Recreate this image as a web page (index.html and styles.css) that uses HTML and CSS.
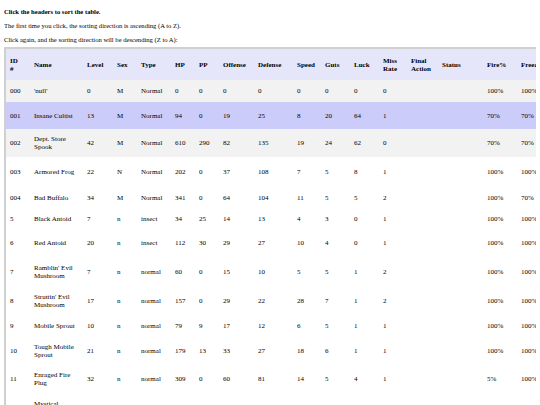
FILE: index.html
```html
<!DOCTYPE html>
<html>
<head>
<meta charset="utf-8">
<link rel="stylesheet" href="styles.css">
</head>
<body>
<div class="intro">
  <p class="lead">Click the headers to sort the table.</p>
  <p>The first time you click, the sorting direction is ascending (A to Z).</p>
  <p>Click again, and the sorting direction will be descending (Z to A):</p>
</div>
<table class="enemies">
  <colgroup>
    <col class="c-id"><col class="c-name"><col class="c-level"><col class="c-sex"><col class="c-type">
    <col class="c-hp"><col class="c-pp"><col class="c-off"><col class="c-def"><col class="c-speed">
    <col class="c-guts"><col class="c-luck"><col class="c-miss"><col class="c-final"><col class="c-status">
    <col class="c-fire"><col class="c-freeze"><col class="c-flash"><col class="c-para">
  </colgroup>
  <thead>
    <tr class="head">
      <th>ID<br>#</th><th>Name</th><th>Level</th><th>Sex</th><th>Type</th><th>HP</th><th>PP</th><th>Offense</th><th>Defense</th><th>Speed</th><th>Guts</th><th>Luck</th><th>Miss<br>Rate</th><th>Final<br>Action</th><th>Status</th><th>Fire%</th><th>Freeze%</th><th>Flash%</th><th>Paralysis%</th>
    </tr>
  </thead>
  <tbody>
    <tr class="grey h22"><td>000</td><td>'null'</td><td>0</td><td>M</td><td>Normal</td><td>0</td><td>0</td><td>0</td><td>0</td><td>0</td><td>0</td><td>0</td><td>0</td><td></td><td></td><td>100%</td><td>100%</td><td>100%</td><td>100%</td></tr>
    <tr class="sel h27"><td>001</td><td>Insane Cultist</td><td>13</td><td>M</td><td>Normal</td><td>94</td><td>0</td><td>19</td><td>25</td><td>8</td><td>20</td><td>64</td><td>1</td><td></td><td></td><td>70%</td><td>70%</td><td>100%</td><td>100%</td></tr>
    <tr class="grey h28"><td>002</td><td>Dept. Store Spook</td><td>42</td><td>M</td><td>Normal</td><td>610</td><td>290</td><td>82</td><td>135</td><td>19</td><td>24</td><td>62</td><td>0</td><td></td><td></td><td>70%</td><td>70%</td><td>100%</td><td>100%</td></tr>
    <tr class="h30"><td>003</td><td>Armored Frog</td><td>22</td><td>N</td><td>Normal</td><td>202</td><td>0</td><td>37</td><td>108</td><td>7</td><td>5</td><td>8</td><td>1</td><td></td><td></td><td>100%</td><td>100%</td><td>100%</td><td>100%</td></tr>
    <tr class="h22"><td>004</td><td>Bad Buffalo</td><td>34</td><td>M</td><td>Normal</td><td>341</td><td>0</td><td>64</td><td>104</td><td>11</td><td>5</td><td>5</td><td>2</td><td></td><td></td><td>100%</td><td>70%</td><td>100%</td><td>100%</td></tr>
    <tr class="h20"><td>5</td><td>Black Antoid</td><td>7</td><td>n</td><td>insect</td><td>34</td><td>25</td><td>14</td><td>13</td><td>4</td><td>3</td><td>0</td><td>1</td><td></td><td></td><td>100%</td><td>100%</td><td>100%</td><td>100%</td></tr>
    <tr class="h28"><td>6</td><td>Red Antoid</td><td>20</td><td>n</td><td>insect</td><td>112</td><td>30</td><td>29</td><td>27</td><td>10</td><td>4</td><td>0</td><td>1</td><td></td><td></td><td>100%</td><td>100%</td><td>100%</td><td>100%</td></tr>
    <tr class="h30"><td>7</td><td>Ramblin' Evil Mushroom</td><td>7</td><td>n</td><td>normal</td><td>60</td><td>0</td><td>15</td><td>10</td><td>5</td><td>5</td><td>1</td><td>2</td><td></td><td></td><td>100%</td><td>100%</td><td>100%</td><td>100%</td></tr>
    <tr class="h28"><td>8</td><td>Struttin' Evil Mushroom</td><td>17</td><td>n</td><td>normal</td><td>157</td><td>0</td><td>29</td><td>22</td><td>28</td><td>7</td><td>1</td><td>2</td><td></td><td></td><td>100%</td><td>100%</td><td>100%</td><td>100%</td></tr>
    <tr class="h22"><td>9</td><td>Mobile Sprout</td><td>10</td><td>n</td><td>normal</td><td>79</td><td>9</td><td>17</td><td>12</td><td>6</td><td>5</td><td>1</td><td>1</td><td></td><td></td><td>100%</td><td>100%</td><td>100%</td><td>100%</td></tr>
    <tr class="h28"><td>10</td><td>Tough Mobile Sprout</td><td>21</td><td>n</td><td>normal</td><td>179</td><td>13</td><td>33</td><td>27</td><td>18</td><td>6</td><td>1</td><td>1</td><td></td><td></td><td>100%</td><td>100%</td><td>100%</td><td>100%</td></tr>
    <tr class="h28"><td>11</td><td>Enraged Fire Plug</td><td>32</td><td>n</td><td>normal</td><td>309</td><td>0</td><td>60</td><td>81</td><td>14</td><td>5</td><td>4</td><td>1</td><td></td><td></td><td>5%</td><td>100%</td><td>100%</td><td>100%</td></tr>
    <tr class="h30"><td>12</td><td>Mystical Record</td><td>35</td><td>n</td><td>normal</td><td>263</td><td>0</td><td>49</td><td>69</td><td>13</td><td>12</td><td>6</td><td>1</td><td></td><td></td><td>100%</td><td>100%</td><td>100%</td><td>100%</td></tr>
  </tbody>
</table>
</body>
</html>
```
FILE: styles.css
```css
html {
  overflow: hidden;
}
body {
  margin: 4px;
  font-family: "Liberation Serif", "Times New Roman", serif;
  font-size: 7px;
  color: #000;
  background: #fff;
}
.intro {
  padding-top: 4px;
}
.intro p {
  margin: 0 0 6px;
  font-size: 6.6px;
  line-height: 8px;
}
.intro p:last-child {
  margin-bottom: 3px;
}
.intro .lead {
  font-weight: bold;
}
.enemies {
  border-collapse: collapse;
  table-layout: fixed;
  width: 644px;
  border: 2px solid #d0d0d0;
}
.enemies th,
.enemies td {
  padding: 0 4px;
  text-align: left;
  vertical-align: middle;
  line-height: 8px;
}
.enemies th {
  font-weight: bold;
}
.head {
  height: 32px;
  background: #e6e6fb;
}
.grey { background: #f2f2f2; }
.sel { background: #ccccfa; }
.h20 { height: 20px; }
.h22 { height: 22px; }
.h27 { height: 27px; }
.h28 { height: 28px; }
.h30 { height: 30px; }
.c-id { width: 25px; }
.c-name { width: 53px; }
.c-level { width: 30px; }
.c-sex { width: 24px; }
.c-type { width: 34px; }
.c-hp { width: 24px; }
.c-pp { width: 24px; }
.c-off { width: 35px; }
.c-def { width: 39px; }
.c-speed { width: 28px; }
.c-guts { width: 29px; }
.c-luck { width: 29px; }
.c-miss { width: 28px; }
.c-final { width: 31px; }
.c-status { width: 45px; }
.c-fire { width: 34px; }
.c-freeze { width: 40px; }
.c-flash { width: 40px; }
.c-para { width: 50px; }
```
